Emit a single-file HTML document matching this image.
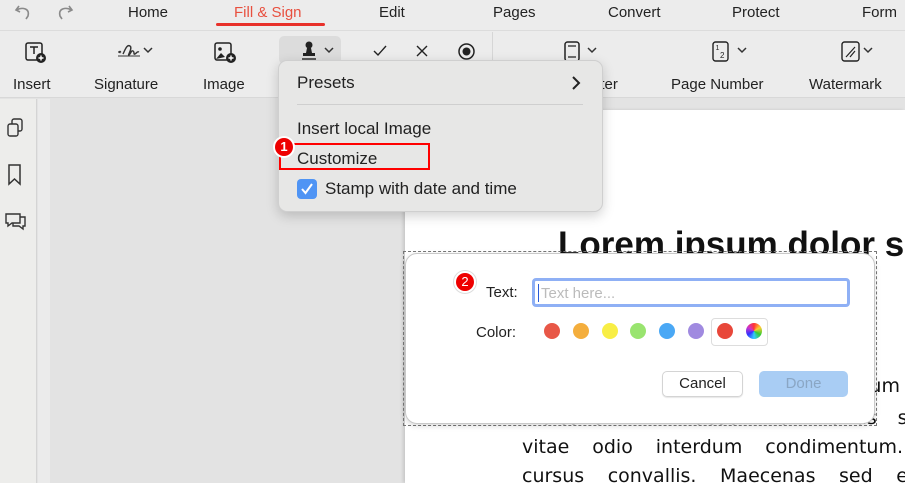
<!DOCTYPE html>
<html><head><meta charset="utf-8"><style>
*{margin:0;padding:0;box-sizing:border-box}
body{width:905px;height:483px;overflow:hidden;position:relative;background:#e3e3e3;font-family:"Liberation Sans",sans-serif;color:#222}
.a{position:absolute}
.tab{position:absolute;top:4px;font-size:15px;color:#222}
.lbl{position:absolute;top:76px;font-size:15px;color:#222}
svg{position:absolute;overflow:visible}
.doc{font-family:"DejaVu Sans",sans-serif;font-size:19px;color:#111;white-space:nowrap;width:381px;text-align:justify;text-align-last:justify}
.dot{position:absolute;width:16px;height:16px;border-radius:50%;top:323px}
</style></head><body>
<div class="a" style="left:0;top:0;width:905px;height:30px;background:#ececec"></div>
<div class="a" style="left:0;top:30px;width:905px;height:68px;background:#ececec;border-top:1px solid #dcdcdc;border-bottom:1px solid #d8d8d8"></div>
<svg style="left:15px;top:4px" width="18" height="16"><path d="M4 2 L1 6 L5 8 M1.5 6 C7 3 15 4 13 12 L11 15" fill="none" stroke="#8a8a8a" stroke-width="1.6"/></svg>
<svg style="left:55px;top:4px" width="18" height="16"><path d="M14 2 L17 6 L13 8 M16.5 6 C11 3 3 4 5 12 L7 15" fill="none" stroke="#8a8a8a" stroke-width="1.6"/></svg>
<div class="tab" style="left:128px">Home</div>
<div class="tab" style="left:234px;color:#e8503f">Fill &amp; Sign</div>
<div class="a" style="left:216px;top:23px;width:109px;height:3px;background:#e8302a;border-radius:2px"></div>
<div class="tab" style="left:379px">Edit</div>
<div class="tab" style="left:493px">Pages</div>
<div class="tab" style="left:608px">Convert</div>
<div class="tab" style="left:732px">Protect</div>
<div class="tab" style="left:862px">Form</div>
<svg style="left:25px;top:42px" width="22" height="22"><rect x="1" y="1" width="16" height="17" rx="2" fill="none" stroke="#222" stroke-width="1.5"/><path d="M5 5h8M9 5v7" stroke="#222" stroke-width="1.5"/><circle cx="16" cy="16" r="5" fill="#222"/><path d="M13.5 16h5M16 13.5v5" stroke="#fff" stroke-width="1.4"/></svg>
<svg style="left:117px;top:42px" width="40" height="18"><path d="M1 10h2M2 9l2 2M4 9l-2 2" stroke="#333" stroke-width="1"/><path d="M6 12c2-4 4-10 7-8s-3 10-1 9 2-5 4-4 0 4 2 3 2-3 4-2" fill="none" stroke="#333" stroke-width="1.4"/><path d="M1 14h22" stroke="#333" stroke-width="1"/><path d="M27 6l4 4 4-4" fill="none" stroke="#333" stroke-width="1.5"/></svg>
<svg style="left:214px;top:42px" width="24" height="22"><rect x="1" y="1" width="16" height="17" rx="2" fill="none" stroke="#222" stroke-width="1.5"/><circle cx="6" cy="7" r="1.8" fill="#222"/><path d="M2 17l5-6 4 4" fill="#222"/><circle cx="17" cy="16" r="5" fill="#222"/><path d="M14.5 16h5M17 13.5v5" stroke="#fff" stroke-width="1.4"/></svg>
<div class="a" style="left:279px;top:36px;width:62px;height:28px;background:#dcdcdc;border-radius:5px"></div>
<svg style="left:300px;top:41px" width="40" height="22"><circle cx="9" cy="4" r="3.5" fill="#222"/><path d="M7 7h4l1 5H6z" fill="#222"/><rect x="3" y="12" width="12" height="3" fill="#222"/><path d="M2 18h14" stroke="#222" stroke-width="1.4"/><path d="M25 7l4 4 4-4" fill="none" stroke="#333" stroke-width="1.5"/></svg>
<svg style="left:373px;top:45px" width="14" height="12"><path d="M1 6l4 4 8-9" fill="none" stroke="#222" stroke-width="1.4"/></svg>
<svg style="left:416px;top:45px" width="12" height="12"><path d="M1 1l10 10M11 1L1 11" stroke="#222" stroke-width="1.4"/></svg>
<svg style="left:458px;top:43px" width="18" height="18"><circle cx="8.5" cy="8.5" r="7.5" fill="none" stroke="#222" stroke-width="1.5"/><circle cx="8.5" cy="8.5" r="4" fill="#222"/></svg>
<div class="a" style="left:492px;top:32px;width:1px;height:64px;background:#d6d6d6"></div>
<svg style="left:564px;top:41px" width="40" height="22"><rect x="1" y="1" width="14" height="19" rx="2.5" fill="none" stroke="#222" stroke-width="1.5"/><path d="M4 5h8M4 16h8" stroke="#222" stroke-width="1.3"/><path d="M24 7l4 4 4-4" fill="none" stroke="#333" stroke-width="1.5"/></svg>
<svg style="left:712px;top:41px" width="40" height="22"><rect x="1" y="1" width="15" height="19" rx="2.5" fill="none" stroke="#222" stroke-width="1.4"/><text x="3.5" y="9" font-size="7" fill="#222" font-family="Liberation Sans">1</text><text x="8" y="17" font-size="8" fill="#222" font-family="Liberation Sans">2</text><path d="M26 7l4 4 4-4" fill="none" stroke="#333" stroke-width="1.5"/></svg>
<svg style="left:841px;top:41px" width="40" height="22"><rect x="1" y="1" width="17" height="19" rx="2.5" fill="none" stroke="#222" stroke-width="1.4"/><path d="M5 16l9-10M9 16l5-6" stroke="#222" stroke-width="1.2"/><path d="M23 7l4 4 4-4" fill="none" stroke="#333" stroke-width="1.5"/></svg>
<div class="lbl" style="left:13px">Insert</div>
<div class="lbl" style="left:94px">Signature</div>
<div class="lbl" style="left:203px">Image</div>
<div class="lbl" style="left:592px">oter</div>
<div class="lbl" style="left:671px">Page Number</div>
<div class="lbl" style="left:809px">Watermark</div>
<div class="a" style="left:0;top:99px;width:37px;height:384px;background:#ededeb;border-right:1px solid #d4d4d4"></div>
<div class="a" style="left:38px;top:99px;width:12px;height:384px;background:#ebebeb"></div>
<svg style="left:6px;top:117px" width="20" height="22"><rect x="6" y="2" width="10" height="12" rx="2" fill="none" stroke="#333" stroke-width="1.4"/><rect x="2" y="7" width="10" height="12" rx="2" fill="#ededeb" stroke="#333" stroke-width="1.4"/></svg>
<svg style="left:8px;top:164px" width="14" height="22"><path d="M1 1h11v19l-5.5-5L1 20z" fill="none" stroke="#333" stroke-width="1.5"/></svg>
<svg style="left:4px;top:211px" width="24" height="20"><path d="M2 3h14v9H8l-4 3v-3H2z" fill="none" stroke="#333" stroke-width="1.4"/><path d="M16 6h5v9h-2v3l-4-3H9v-3" fill="none" stroke="#333" stroke-width="1.4"/></svg>
<div class="a" style="left:405px;top:110px;width:500px;height:373px;background:#fff;box-shadow:-2px 0 3px rgba(0,0,0,.12);overflow:hidden">
<div class="a" style="left:153px;top:115px;font-size:35px;font-weight:bold;color:#111;white-space:nowrap">Lorem ipsum dolor s</div>
<div class="a doc" style="left:117px;top:265px;width:400px">Lorem ipsum dolor sit amet conse ctum um</div>
<div class="a doc" style="left:117px;top:297px;width:405px">molestie mi. Praesent at varius ser</div>
<div class="a doc" style="left:117px;top:326px">vitae odio interdum condimentum.</div>
<div class="a doc" style="left:117px;top:355px;width:398px">cursus convallis. Maecenas sed eg</div>
</div>
<div class="a" style="left:403px;top:251px;width:474px;height:175px;border:1px dashed #777"></div>
<div class="a" style="left:405px;top:253px;width:470px;height:171px;background:#fff;border-radius:12px;border:1px solid #c8c8c8;box-shadow:0 2px 6px rgba(0,0,0,.15)"></div>
<div class="a" style="left:453px;top:270px;width:24px;height:24px;border-radius:50%;background:#fff;border:1px solid #ddd"></div>
<div class="a" style="left:456px;top:273px;width:18px;height:18px;border-radius:50%;background:#e00;color:#fff;font-size:13px;text-align:center;line-height:18px">2</div>
<div class="a" style="left:486px;top:284px;font-size:15px">Text:</div>
<div class="a" style="left:532px;top:278px;width:318px;height:29px;border:3px solid #8fb0f5;border-radius:4px;background:#fff"></div>
<div class="a" style="left:538px;top:284px;width:1px;height:18px;background:#2a5bd7"></div>
<div class="a" style="left:541px;top:285px;font-size:15px;color:#bbb">Text here...</div>
<div class="a" style="left:476px;top:324px;font-size:15px">Color:</div>
<div class="dot" style="left:544px;background:#e85747"></div>
<div class="dot" style="left:573px;background:#f4ae3d"></div>
<div class="dot" style="left:602px;background:#f8ee45"></div>
<div class="dot" style="left:630px;background:#99e46f"></div>
<div class="dot" style="left:659px;background:#4aa8f5"></div>
<div class="dot" style="left:688px;background:#a08ae0"></div>
<div class="a" style="left:711px;top:318px;width:57px;height:28px;border:1px solid #ddd;border-radius:4px"></div>
<div class="dot" style="left:717px;background:#e8473a"></div>
<div class="dot" style="left:746px;background:conic-gradient(#f33,#fc3,#3c3,#3cf,#33f,#c3c,#f33)"></div>
<div class="a" style="left:662px;top:371px;width:81px;height:26px;border:1px solid #d4d4d4;border-radius:5px;box-shadow:0 1px 1px rgba(0,0,0,.1);font-size:15px;text-align:center;line-height:24px">Cancel</div>
<div class="a" style="left:759px;top:371px;width:89px;height:26px;background:#a9cdf4;border-radius:5px;font-size:15px;text-align:center;line-height:26px;color:#8aa6c4">Done</div>
<div class="a" style="left:278px;top:60px;width:325px;height:152px;background:#e7e7e6;border-radius:9px;border:1px solid #cfcfcf;box-shadow:0 4px 12px rgba(0,0,0,.18)"></div>
<div class="a" style="left:297px;top:73px;font-size:17px">Presets</div>
<svg style="left:571px;top:76px" width="10" height="14"><path d="M2 1l6 6-6 6" fill="none" stroke="#222" stroke-width="2"/></svg>
<div class="a" style="left:297px;top:104px;width:286px;height:1px;background:#cfcfcf"></div>
<div class="a" style="left:297px;top:119px;font-size:17px">Insert local Image</div>
<div class="a" style="left:297px;top:149px;font-size:17px">Customize</div>
<div class="a" style="left:279px;top:143px;width:151px;height:27px;border:2px solid #f00"></div>
<div class="a" style="left:273px;top:136px;width:22px;height:22px;border-radius:50%;background:#fff"></div>
<div class="a" style="left:275px;top:138px;width:18px;height:18px;border-radius:50%;background:#e00;color:#fff;font-size:13px;font-weight:bold;text-align:center;line-height:18px">1</div>
<div class="a" style="left:297px;top:179px;width:20px;height:20px;border-radius:4px;background:#4f94f4"></div>
<svg style="left:300px;top:182px" width="14" height="14"><path d="M2 7l3.5 4L12 2" fill="none" stroke="#fff" stroke-width="2"/></svg>
<div class="a" style="left:325px;top:179px;font-size:17px">Stamp with date and time</div>
</body></html>
